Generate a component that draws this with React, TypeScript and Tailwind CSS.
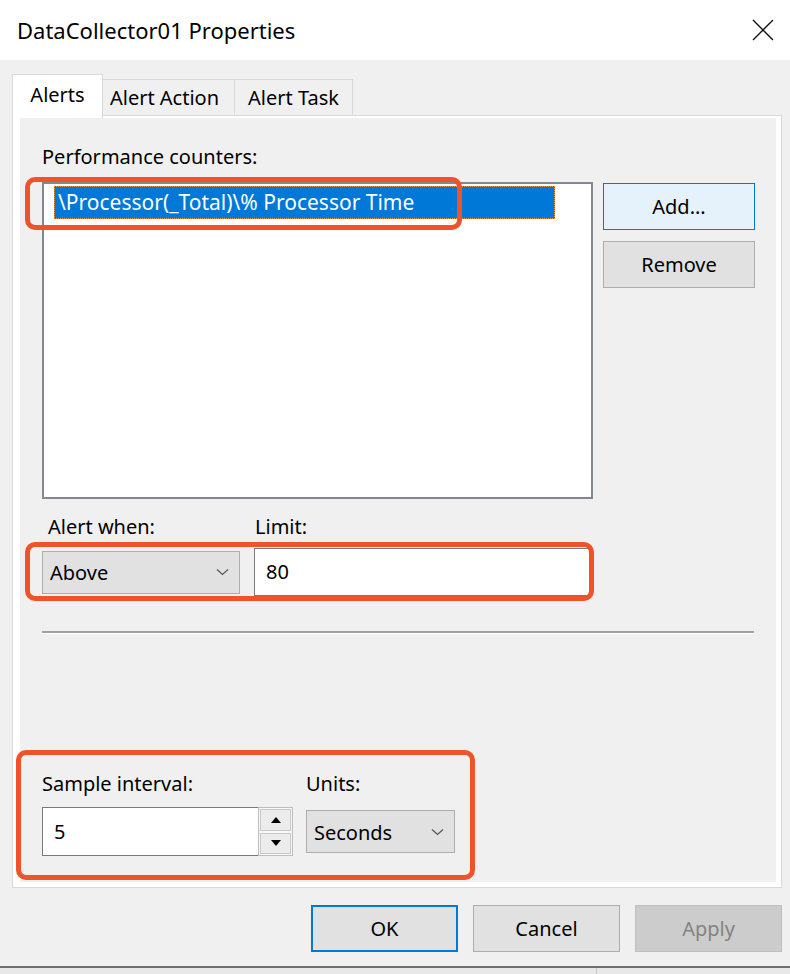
import React from 'react';

// Small chevron used by the combo boxes
const Chevron = () => (
  <svg width="13" height="8" viewBox="0 0 13 8" className="shrink-0">
    <path d="M1 1.5 L6.5 6.5 L12 1.5" fill="none" stroke="#555" strokeWidth="1.2" />
  </svg>
);

const ComboBox = ({ value, className }: { value: string; className: string }) => (
  <div className={`flex items-center justify-between bg-[#e1e1e1] border border-[#adadad] pl-[7px] pr-[10px] ${className}`}>
    <span className="text-[20px] leading-none pt-[2px]">{value}</span>
    <Chevron />
  </div>
);

const DialogButton = ({
  label,
  variant = 'normal',
  className,
}: {
  label: string;
  variant?: 'normal' | 'default' | 'hover' | 'disabled';
  className: string;
}) => {
  const styles = {
    normal: 'bg-[#e1e1e1] border border-[#adadad] text-black',
    default: 'bg-[#e1e1e1] border-2 border-[#0078d7] text-black',
    hover: 'bg-[#e5f1fb] border border-[#0078d7] text-black',
    disabled: 'bg-[#cccccc] border border-[#bfbfbf] text-[#838383]',
  }[variant];
  return (
    <div className={`flex items-center justify-center text-[20px] ${styles} ${className}`}>{label}</div>
  );
};

const Tab = ({ label, active = false, className }: { label: string; active?: boolean; className: string }) => (
  <div
    className={`flex items-center justify-center border border-b-0 border-[#d9d9d9] text-[20px] ${
      active ? 'bg-white h-[44px] -mb-[3px] relative z-10 pb-[3px]' : 'bg-[#f0f0f0] h-[36px]'
    } ${className}`}
  >
    {label}
  </div>
);

export default function App() {
  return (
    <div className="relative w-[790px] h-[974px] bg-[#e8e8e8] overflow-hidden text-black font-['Noto_Sans','Open_Sans',sans-serif]">
      <div className="h-[966px] flex flex-col bg-[#f0f0f0]">
        {/* Title bar */}
        <div className="h-[60px] bg-white flex items-center justify-between pl-[17px] pr-[16px] shrink-0">
          <span className="text-[22px] leading-none">DataCollector01 Properties</span>
          <svg width="22" height="22" viewBox="0 0 22 22">
            <path d="M1 1 L21 21 M21 1 L1 21" stroke="#111" strokeWidth="1.4" />
          </svg>
        </div>

        <div className="flex-1 flex flex-col pl-[12px] pr-[8px] pt-[14px]">
          {/* Tabs */}
          <div className="flex items-end h-[41px]">
            <Tab label="Alerts" active className="w-[91px]" />
            <Tab label="Alert Action" className="w-[132px] border-l-0 pr-[8px]" />
            <Tab label="Alert Task" className="w-[118px] border-l-0" />
          </div>

          {/* Tab page */}
          <div className="h-[773px] flex flex-col bg-white border border-[#d9d9d9] pl-[7px] pr-[5px] pt-[2px] pb-[5px]">
            <div className="flex-1 flex flex-col bg-[#f0f0f0] pl-[22px]">
              <div className="mt-[26px] text-[20px] leading-[26px]">Performance counters:</div>

              <div className="mt-[12px] flex gap-[10px]">
                <div className="w-[551px] h-[317px] bg-white border-2 border-[#828790] pl-[10px] pt-[2px]">
                  <div className="w-[501px] h-[33px] bg-[#0078d7] border border-dotted border-[#e0a050] text-white text-[21px] flex items-center pl-[3px]">
                    \Processor(_Total)\% Processor Time
                  </div>
                </div>
                <div className="mt-[1px] flex flex-col gap-[11px]">
                  <DialogButton label="Add..." variant="hover" className="w-[152px] h-[47px]" />
                  <DialogButton label="Remove" className="w-[152px] h-[47px]" />
                </div>
              </div>

              <div className="mt-[15px] flex text-[20px] leading-[26px]">
                <span className="ml-[6px] w-[207px]">Alert when:</span>
                <span>Limit:</span>
              </div>

              <div className="mt-[8px] flex items-center gap-[14px]">
                <ComboBox value="Above" className="w-[198px] h-[43px]" />
                <div className="w-[336px] h-[48px] bg-white border border-[#7a7a7a] flex items-center pl-[11px] text-[20px]">
                  80
                </div>
              </div>

              <div className="mt-[35px] w-[712px] border-t-2 border-[#a0a0a0] border-b border-b-white" />

              <div className="mt-[137px] flex text-[20px] leading-[26px]">
                <span className="w-[264px]">Sample interval:</span>
                <span>Units:</span>
              </div>

              <div className="mt-[10px] flex items-center">
                <div className="w-[216px] h-[49px] bg-white border border-[#7a7a7a] border-r-0 flex items-center pl-[11px] text-[20px]">
                  5
                </div>
                <div className="w-[35px] h-[49px] flex flex-col gap-[2px] p-[1px] bg-[#f7f7f7] border border-[#bdbdbd]">
                  <div className="flex-1 flex items-center justify-center bg-[#ececec] border border-[#c8c8c8]">
                    <svg width="10" height="6" viewBox="0 0 10 6">
                      <path d="M0 6 L5 0 L10 6 Z" fill="#000" />
                    </svg>
                  </div>
                  <div className="flex-1 flex items-center justify-center bg-[#ececec] border border-[#c8c8c8]">
                    <svg width="10" height="6" viewBox="0 0 10 6">
                      <path d="M0 0 L10 0 L5 6 Z" fill="#000" />
                    </svg>
                  </div>
                </div>
                <ComboBox value="Seconds" className="ml-[13px] w-[149px] h-[43px]" />
              </div>
            </div>
          </div>

          {/* Dialog buttons */}
          <div className="mt-[17px] flex justify-end gap-[15px]">
            <DialogButton label="OK" variant="default" className="w-[147px] h-[47px]" />
            <DialogButton label="Cancel" className="w-[147px] h-[47px]" />
            <DialogButton label="Apply" variant="disabled" className="w-[147px] h-[47px]" />
          </div>
        </div>
      </div>
      <div className="h-[2px] bg-[#6f6f6f]" />
      <div className="h-[6px] flex">
        <div className="w-[597px] border-r border-[#c8c8c8]" />
      </div>

      {/* Annotation outlines drawn over the dialog */}
      <div className="absolute left-[25px] top-[177px] w-[437px] h-[53px] border-[5px] border-[#f0522a] rounded-[10px]" />
      <div className="absolute left-[25px] top-[542px] w-[569px] h-[59px] border-[5px] border-[#f0522a] rounded-[10px]" />
      <div className="absolute left-[16px] top-[750px] w-[459px] h-[130px] border-[5px] border-[#f0522a] rounded-[10px]" />
    </div>
  );
}
